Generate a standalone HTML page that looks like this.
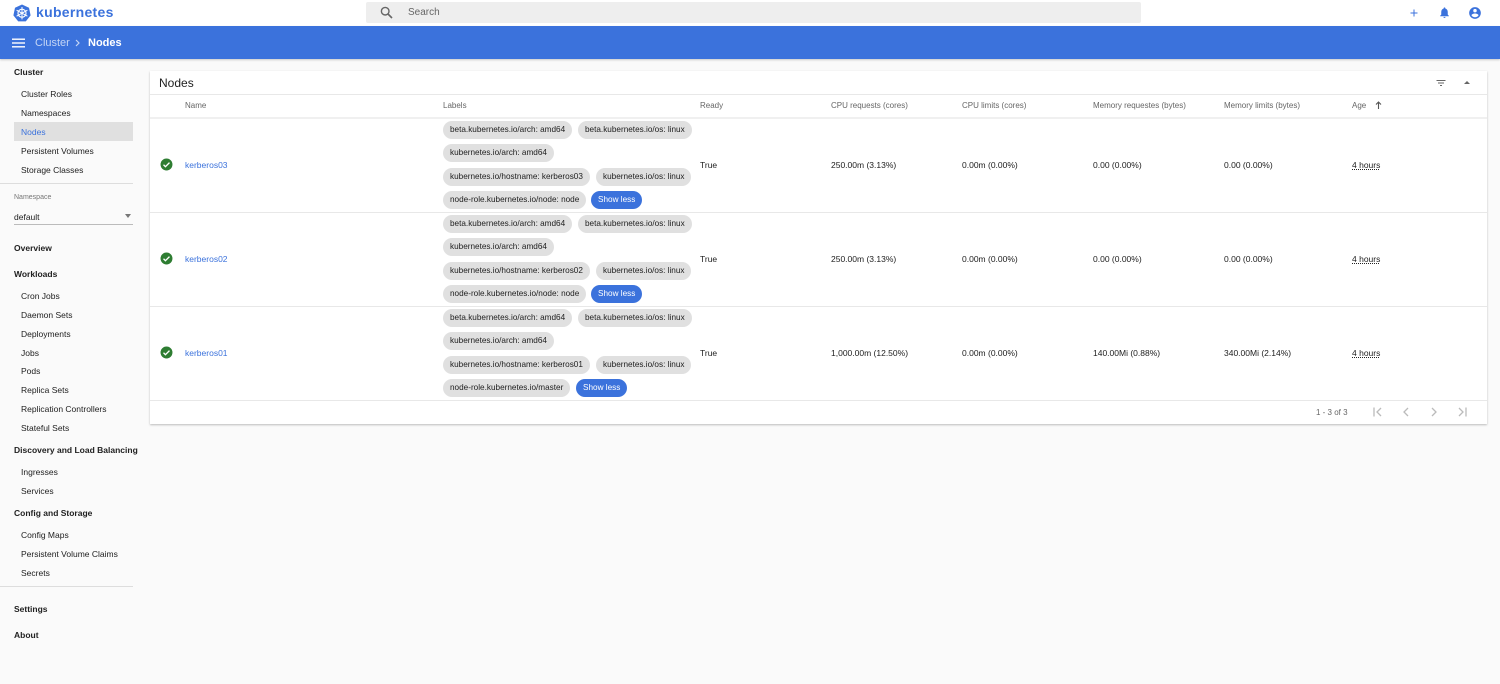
<!DOCTYPE html>
<html><head><meta charset="utf-8"><style>
*{margin:0;padding:0;box-sizing:border-box}
body{width:1500px;height:684px;background:#fafafa;font-family:"Liberation Sans",sans-serif;position:relative;overflow:hidden;color:#212121}
.a{position:absolute;white-space:nowrap}
.top{left:0;top:0;width:1500px;height:26px;background:#fff}
.blue{left:0;top:26px;width:1500px;height:33px;background:#3b72dc;box-shadow:0 1px 2px rgba(0,0,0,.2)}
.search{left:366px;top:2px;width:775px;height:21px;background:#eeeeee;border-radius:2px}
.sb{font-size:8.5px;color:#212121}
.sh{font-size:8.5px;font-weight:bold;color:#212121}
.card{left:150px;top:71px;width:1337px;height:353px;background:#fff;box-shadow:0 1px 2px rgba(0,0,0,.25)}
.th{font-size:8px;color:#666}
.td{font-size:8.5px;color:#212121}
.chip{position:absolute;height:18px;line-height:18px;border-radius:9px;background:#e0e0e0;font-size:8.2px;padding:0 7px;color:#212121;white-space:nowrap}
.btn{background:#3b72dc;color:#fff}
.hl{height:1px;background:#e8e8e8;left:150px;width:1337px}
.link{color:#3b72dc}
.ul{text-decoration:underline;text-decoration-style:dotted}
</style></head><body>
<div class="a top"></div>
<svg class="a" style="left:13px;top:4px" width="18" height="18" viewBox="0 0 18 18"><polygon points="9,0.5 16,3.8 17.6,11.4 12.8,17.4 5.2,17.4 0.4,11.4 2,3.8" fill="#3b72dc"/><circle cx="9" cy="9.2" r="4" fill="none" stroke="#fff" stroke-width="1.2"/><g stroke="#fff" stroke-width="1"><line x1="9" y1="3" x2="9" y2="15.4"/><line x1="3.6" y1="6.2" x2="14.4" y2="12.2"/><line x1="3.6" y1="12.2" x2="14.4" y2="6.2"/></g></svg>
<div class="a" style="left:36px;top:4px;font-size:14px;font-weight:bold;color:#3b72dc;letter-spacing:.3px">kubernetes</div>
<div class="a search"></div>
<svg class="a" style="left:380px;top:6px" width="13" height="13" viewBox="0 0 13 13"><circle cx="5.2" cy="5.2" r="3.8" fill="none" stroke="#666" stroke-width="1.4"/><line x1="8" y1="8" x2="12" y2="12" stroke="#666" stroke-width="1.6"/></svg>
<div class="a" style="left:408px;top:7px;font-size:10px;color:#666">Search</div>
<svg class="a" style="left:1408px;top:7px" width="12" height="12" viewBox="0 0 24 24"><path d="M19 13h-6v6h-2v-6H5v-2h6V5h2v6h6z" fill="#3b72dc"/></svg>
<svg class="a" style="left:1438px;top:6px" width="13" height="13" viewBox="0 0 24 24"><path d="M12 22c1.1 0 2-.9 2-2h-4a2 2 0 0 0 2 2zm6-6v-5c0-3.1-1.6-5.6-4.5-6.3V4a1.5 1.5 0 0 0-3 0v.7C7.6 5.4 6 7.9 6 11v5l-2 2v1h16v-1z" fill="#3b72dc"/></svg>
<svg class="a" style="left:1468px;top:6px" width="14" height="14" viewBox="0 0 24 24"><path d="M12 2a10 10 0 1 0 0 20 10 10 0 0 0 0-20zm0 3a3 3 0 1 1 0 6 3 3 0 0 1 0-6zm0 14.2a7.2 7.2 0 0 1-6-3.2c0-2 4-3.1 6-3.1s6 1.1 6 3.1a7.2 7.2 0 0 1-6 3.2z" fill="#3b72dc"/></svg>
<div class="a blue"></div>
<svg class="a" style="left:12px;top:37px" width="13" height="12" viewBox="0 0 13 12"><g fill="#fff"><rect y="1.5" width="13" height="1.4"/><rect y="5.3" width="13" height="1.4"/><rect y="9.1" width="13" height="1.4"/></g></svg>
<div class="a" style="left:35px;top:37px;font-size:11px;color:#c5d6f5">Cluster</div>
<svg class="a" style="left:74px;top:39px" width="7" height="8" viewBox="0 0 7 8"><path d="M2 1l3 3-3 3" stroke="#c5d6f5" stroke-width="1.2" fill="none"/></svg>
<div class="a" style="left:88px;top:37px;font-size:11px;font-weight:bold;color:#fff">Nodes</div>
<!-- sidebar -->
<div class="a sh" style="left:14px;top:67px">Cluster</div>
<div class="a sb" style="left:21px;top:89px">Cluster Roles</div>
<div class="a sb" style="left:21px;top:108px">Namespaces</div>
<div class="a" style="left:14px;top:122px;width:119px;height:19px;background:#e0e0e0"></div>
<div class="a sb link" style="left:21px;top:127px">Nodes</div>
<div class="a sb" style="left:21px;top:146px">Persistent Volumes</div>
<div class="a sb" style="left:21px;top:165px">Storage Classes</div>
<div class="a" style="left:0;top:183px;width:133px;height:1px;background:#ddd"></div>
<div class="a" style="left:14px;top:194px;font-size:7px;color:#777">Namespace</div>
<div class="a sb" style="left:14px;top:212px">default</div>
<div class="a" style="left:125px;top:214px;border-left:3px solid transparent;border-right:3px solid transparent;border-top:4px solid #777"></div>
<div class="a" style="left:14px;top:224px;width:119px;height:1px;background:#bbb"></div>
<div class="a sh" style="left:14px;top:243px">Overview</div>
<div class="a sh" style="left:14px;top:269px">Workloads</div>
<div class="a sb" style="left:21px;top:291px">Cron Jobs</div>
<div class="a sb" style="left:21px;top:310px">Daemon Sets</div>
<div class="a sb" style="left:21px;top:329px">Deployments</div>
<div class="a sb" style="left:21px;top:348px">Jobs</div>
<div class="a sb" style="left:21px;top:366px">Pods</div>
<div class="a sb" style="left:21px;top:385px">Replica Sets</div>
<div class="a sb" style="left:21px;top:404px">Replication Controllers</div>
<div class="a sb" style="left:21px;top:423px">Stateful Sets</div>
<div class="a sh" style="left:14px;top:445px">Discovery and Load Balancing</div>
<div class="a sb" style="left:21px;top:467px">Ingresses</div>
<div class="a sb" style="left:21px;top:486px">Services</div>
<div class="a sh" style="left:14px;top:508px">Config and Storage</div>
<div class="a sb" style="left:21px;top:530px">Config Maps</div>
<div class="a sb" style="left:21px;top:549px">Persistent Volume Claims</div>
<div class="a sb" style="left:21px;top:568px">Secrets</div>
<div class="a" style="left:0;top:586px;width:133px;height:1px;background:#ddd"></div>
<div class="a sh" style="left:14px;top:604px">Settings</div>
<div class="a sh" style="left:14px;top:630px">About</div>
<!-- card -->
<div class="a card"></div>
<div class="a" style="left:159px;top:76px;font-size:12px;color:#212121">Nodes</div>
<svg class="a" style="left:1435px;top:77px" width="12" height="12" viewBox="0 0 24 24"><path d="M10 18h4v-2h-4zM3 6v2h18V6zm3 7h12v-2H6z" fill="#666"/></svg>
<div class="a" style="left:1464px;top:81px;border-left:3px solid transparent;border-right:3px solid transparent;border-bottom:3px solid #666"></div>
<div class="a hl" style="top:94px"></div>
<div class="a th" style="left:185px;top:101px">Name</div>
<div class="a th" style="left:443px;top:101px">Labels</div>
<div class="a th" style="left:700px;top:101px">Ready</div>
<div class="a th" style="left:831px;top:101px">CPU requests (cores)</div>
<div class="a th" style="left:962px;top:101px">CPU limits (cores)</div>
<div class="a th" style="left:1093px;top:101px">Memory requestes (bytes)</div>
<div class="a th" style="left:1224px;top:101px">Memory limits (bytes)</div>
<div class="a th" style="left:1352px;top:101px">Age</div>
<svg class="a" style="left:1375px;top:101px" width="7" height="8" viewBox="0 0 7 8"><path d="M3.5 8V1M1 3.5l2.5-2.5 2.5 2.5" stroke="#555" stroke-width="1.1" fill="none"/></svg>
<div class="a hl" style="top:117px;height:2px;background:#f0f0f0"></div>

<div class="a" style="left:0;top:118px;width:1500px;height:94px">
 <svg class="a" style="left:160px;top:40px" width="13" height="13" viewBox="0 0 24 24"><circle cx="12" cy="12" r="11" fill="#2e7d32"/><path d="M6.5 12.5l3.5 3.5 7.5-7.5" stroke="#fff" stroke-width="2.4" fill="none"/></svg>
 <div class="a td link" style="left:185px;top:42px">kerberos03</div>
 <div class="chip" style="left:443px;top:3px">beta.kubernetes.io/arch: amd64</div>
 <div class="chip" style="left:578px;top:3px">beta.kubernetes.io/os: linux</div>
 <div class="chip" style="left:443px;top:26px">kubernetes.io/arch: amd64</div>
 <div class="chip" style="left:443px;top:50px">kubernetes.io/hostname: kerberos03</div>
 <div class="chip" style="left:596px;top:50px">kubernetes.io/os: linux</div>
 <div class="chip" style="left:443px;top:73px">node-role.kubernetes.io/node: node</div>
 <div class="chip btn" style="left:591px;top:73px">Show less</div>
 <div class="a td" style="left:700px;top:42px">True</div>
 <div class="a td" style="left:831px;top:42px">250.00m (3.13%)</div>
 <div class="a td" style="left:962px;top:42px">0.00m (0.00%)</div>
 <div class="a td" style="left:1093px;top:42px">0.00 (0.00%)</div>
 <div class="a td" style="left:1224px;top:42px">0.00 (0.00%)</div>
 <div class="a td ul" style="left:1352px;top:42px">4 hours</div>
</div>
<div class="a hl" style="top:212px"></div>
<div class="a" style="left:0;top:212px;width:1500px;height:94px">
 <svg class="a" style="left:160px;top:40px" width="13" height="13" viewBox="0 0 24 24"><circle cx="12" cy="12" r="11" fill="#2e7d32"/><path d="M6.5 12.5l3.5 3.5 7.5-7.5" stroke="#fff" stroke-width="2.4" fill="none"/></svg>
 <div class="a td link" style="left:185px;top:42px">kerberos02</div>
 <div class="chip" style="left:443px;top:3px">beta.kubernetes.io/arch: amd64</div>
 <div class="chip" style="left:578px;top:3px">beta.kubernetes.io/os: linux</div>
 <div class="chip" style="left:443px;top:26px">kubernetes.io/arch: amd64</div>
 <div class="chip" style="left:443px;top:50px">kubernetes.io/hostname: kerberos02</div>
 <div class="chip" style="left:596px;top:50px">kubernetes.io/os: linux</div>
 <div class="chip" style="left:443px;top:73px">node-role.kubernetes.io/node: node</div>
 <div class="chip btn" style="left:591px;top:73px">Show less</div>
 <div class="a td" style="left:700px;top:42px">True</div>
 <div class="a td" style="left:831px;top:42px">250.00m (3.13%)</div>
 <div class="a td" style="left:962px;top:42px">0.00m (0.00%)</div>
 <div class="a td" style="left:1093px;top:42px">0.00 (0.00%)</div>
 <div class="a td" style="left:1224px;top:42px">0.00 (0.00%)</div>
 <div class="a td ul" style="left:1352px;top:42px">4 hours</div>
</div>
<div class="a hl" style="top:306px"></div>
<div class="a" style="left:0;top:306px;width:1500px;height:94px">
 <svg class="a" style="left:160px;top:40px" width="13" height="13" viewBox="0 0 24 24"><circle cx="12" cy="12" r="11" fill="#2e7d32"/><path d="M6.5 12.5l3.5 3.5 7.5-7.5" stroke="#fff" stroke-width="2.4" fill="none"/></svg>
 <div class="a td link" style="left:185px;top:42px">kerberos01</div>
 <div class="chip" style="left:443px;top:3px">beta.kubernetes.io/arch: amd64</div>
 <div class="chip" style="left:578px;top:3px">beta.kubernetes.io/os: linux</div>
 <div class="chip" style="left:443px;top:26px">kubernetes.io/arch: amd64</div>
 <div class="chip" style="left:443px;top:50px">kubernetes.io/hostname: kerberos01</div>
 <div class="chip" style="left:596px;top:50px">kubernetes.io/os: linux</div>
 <div class="chip" style="left:443px;top:73px">node-role.kubernetes.io/master</div>
 <div class="chip btn" style="left:576px;top:73px">Show less</div>
 <div class="a td" style="left:700px;top:42px">True</div>
 <div class="a td" style="left:831px;top:42px">1,000.00m (12.50%)</div>
 <div class="a td" style="left:962px;top:42px">0.00m (0.00%)</div>
 <div class="a td" style="left:1093px;top:42px">140.00Mi (0.88%)</div>
 <div class="a td" style="left:1224px;top:42px">340.00Mi (2.14%)</div>
 <div class="a td ul" style="left:1352px;top:42px">4 hours</div>
</div>
<div class="a hl" style="top:400px"></div>
<div class="a" style="left:1316px;top:408px;font-size:8px;color:#666">1 - 3 of 3</div>
<svg class="a" style="left:1372px;top:406px" width="12" height="12" viewBox="0 0 12 12"><path d="M2 1.5v9M9 2l-4 4 4 4" stroke="#bbb" stroke-width="1.3" fill="none"/></svg>
<svg class="a" style="left:1400px;top:406px" width="12" height="12" viewBox="0 0 12 12"><path d="M8 2l-4 4 4 4" stroke="#bbb" stroke-width="1.3" fill="none"/></svg>
<svg class="a" style="left:1428px;top:406px" width="12" height="12" viewBox="0 0 12 12"><path d="M4 2l4 4-4 4" stroke="#bbb" stroke-width="1.3" fill="none"/></svg>
<svg class="a" style="left:1456px;top:406px" width="12" height="12" viewBox="0 0 12 12"><path d="M10 1.5v9M3 2l4 4-4 4" stroke="#bbb" stroke-width="1.3" fill="none"/></svg>
</body></html>
